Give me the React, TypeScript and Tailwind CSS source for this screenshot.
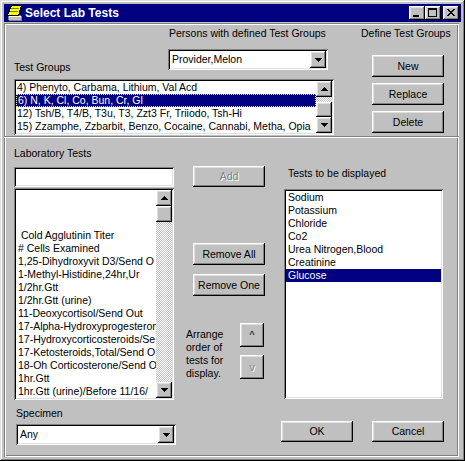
import clsx from "clsx";
import type { ReactNode } from "react";

const raised =
  "shadow-[inset_-1px_-1px_#000,inset_1px_1px_#fff,inset_-2px_-2px_#808080,inset_2px_2px_#dfdfdf]";
const sunken =
  "shadow-[inset_1px_1px_#808080,inset_-1px_-1px_#fff,inset_2px_2px_#000,inset_-2px_-2px_#dfdfdf]";
const dither =
  "bg-[image:repeating-conic-gradient(#c0c0c0_0_25%,#fff_0_50%)] bg-[length:2px_2px]";

const testGroups = [
  "4) Phenyto, Carbama, Lithium, Val Acd",
  "6) N, K, Cl, Co, Bun, Cr, Gl",
  "12) Tsh/B, T4/B, T3u, T3, Zzt3 Fr, Triiodo, Tsh-Hi",
  "15) Zzamphe, Zzbarbit, Benzo, Cocaine, Cannabi, Metha, Opia",
];

const labTests = [
  "",
  "",
  "",
  " Cold Agglutinin Titer",
  "# Cells Examined",
  "1,25-Dihydroxyvit D3/Send O",
  "1-Methyl-Histidine,24hr,Ur",
  "1/2hr.Gtt",
  "1/2hr.Gtt (urine)",
  "11-Deoxycortisol/Send Out",
  "17-Alpha-Hydroxyprogesteron",
  "17-Hydroxycorticosteroids/Se",
  "17-Ketosteroids,Total/Send O",
  "18-Oh Corticosterone/Send O",
  "1hr.Gtt",
  "1hr.Gtt (urine)/Before 11/16/",
];

const displayed = [
  "Sodium",
  "Potassium",
  "Chloride",
  "Co2",
  "Urea Nitrogen,Blood",
  "Creatinine",
  "Glucose",
];

function Tri({ dir }: { dir: "up" | "down" }) {
  const rows = dir === "up" ? [0, 1, 2, 3] : [3, 2, 1, 0];
  return (
    <svg width="7" height="4" viewBox="0 0 7 4" shapeRendering="crispEdges">
      {rows.map((w, i) => (
        <rect key={i} x={3 - w} y={i} width={w * 2 + 1} height={1} fill="#000" />
      ))}
    </svg>
  );
}

function Arrow({ dir, className }: { dir: "up" | "down"; className?: string }) {
  return (
    <div className={clsx("flex w-[16px] items-center justify-center bg-[#c0c0c0]", raised, className)}>
      <Tri dir={dir} />
    </div>
  );
}

function Btn({
  children,
  className,
  disabled,
}: {
  children: ReactNode;
  className?: string;
  disabled?: boolean;
}) {
  return (
    <div
      className={clsx(
        "flex shrink-0 items-center justify-center bg-[#c0c0c0] whitespace-nowrap",
        raised,
        disabled ? "text-[#808080] [text-shadow:1px_1px_0_#fff]" : "text-black",
        className,
      )}
    >
      {children}
    </div>
  );
}

function Combo({ value, className }: { value: string; className?: string }) {
  return (
    <div className={clsx("flex shrink-0 bg-white p-[2px]", sunken, className)}>
      <div className="flex-1 self-center pl-[2px] whitespace-nowrap">{value}</div>
      <Arrow dir="down" className="h-full" />
    </div>
  );
}

function TitleButton({ kind }: { kind: "min" | "max" | "close" }) {
  return (
    <div className={clsx("h-[14px] w-[16px] bg-[#c0c0c0]", raised)}>
      <svg width="16" height="14" viewBox="0 0 16 14" shapeRendering="crispEdges">
        {kind === "min" && <rect x="4" y="9" width="6" height="2" fill="#000" />}
        {kind === "max" && (
          <g fill="#000">
            <rect x="3" y="2" width="9" height="2" />
            <rect x="3" y="2" width="1" height="9" />
            <rect x="11" y="2" width="1" height="9" />
            <rect x="3" y="10" width="9" height="1" />
          </g>
        )}
        {kind === "close" && (
          <g fill="#000">
            {[0, 1, 2, 3, 4, 5, 6].map((i) => (
              <g key={i}>
                <rect x={4 + i} y={3 + i} width="2" height="1" />
                <rect x={10 - i} y={3 + i} width="2" height="1" />
              </g>
            ))}
          </g>
        )}
      </svg>
    </div>
  );
}

function TitleIcon() {
  return (
    <svg width="16" height="16" viewBox="0 0 16 16" shapeRendering="crispEdges">
      <polygon points="2,10 14,10 15,11 15,15 3,15 2,14" fill="#fff" stroke="#808080" strokeWidth="1" />
      <rect x="3" y="12" width="12" height="3" fill="#c0c0c0" />
      <polygon points="5.5,0.5 15.5,0.5 12.5,10.5 1.5,10.5" fill="#ffff00" stroke="#000" strokeWidth="1" />
      <line x1="5" y1="3.5" x2="13" y2="3.5" stroke="#808000" />
      <line x1="4" y1="6.5" x2="12" y2="6.5" stroke="#808000" />
    </svg>
  );
}

export default function App() {
  return (
    <div className="h-[461px] w-[465px] bg-[#c0c0c0] p-[4px] font-['Liberation_Sans',Arial,sans-serif] text-[10.5px] leading-[13px] text-black shadow-[inset_-1px_-1px_#000,inset_1px_1px_#dfdfdf,inset_-2px_-2px_#808080,inset_2px_2px_#fff] select-none">
      {/* title bar */}
      <div className="flex h-[18px] items-center bg-[#000080] px-[2px]">
        <TitleIcon />
        <span className="ml-[3px] text-[12px] leading-[18px] font-bold text-white">Select Lab Tests</span>
        <div className="ml-auto flex">
          <TitleButton kind="min" />
          <TitleButton kind="max" />
          <div className="w-[2px]" />
          <TitleButton kind="close" />
        </div>
      </div>

      <div className="mt-[1px] flex h-[434px] w-[455px] flex-col shadow-[inset_1px_1px_#808080,inset_-1px_-1px_#fff,inset_2px_2px_#fff,inset_-2px_-2px_#808080]">
        {/* test groups */}
        <div className="flex h-[113px]">
          <div className="ml-[10px] flex w-[320px] flex-col">
            <div className="mt-[4px] pl-[155px] whitespace-nowrap">Persons with defined Test Groups</div>
            <div className="mt-[9px] flex h-[30px]">
              <div className="w-[154px] pt-[12px]">Test Groups</div>
              <Combo value="Provider,Melon" className="h-[21px] w-[160px]" />
            </div>
            <div className={clsx("flex h-[56px] w-[320px] bg-white p-[2px]", sunken)}>
              <div className="min-w-0 flex-1 overflow-hidden">
                {testGroups.map((g, i) => (
                  <div
                    key={g}
                    className={clsx(
                      "h-[13px] pl-[1px] whitespace-nowrap",
                      i === 1 && "border border-dotted border-[#ffff00] bg-[#000080] pl-0 leading-[11px] text-white",
                    )}
                  >
                    {g}
                  </div>
                ))}
              </div>
              <div className="flex w-[16px] flex-col">
                <Arrow dir="up" className="h-[16px]" />
                <div className={clsx("h-[5px]", dither)} />
                <div className={clsx("h-[15px] bg-[#c0c0c0]", raised)} />
                <Arrow dir="down" className="h-[16px]" />
              </div>
            </div>
          </div>
          <div className="ml-[27px] flex flex-col">
            <div className="mt-[4px] whitespace-nowrap">Define Test Groups</div>
            <Btn className="mt-[15px] ml-[11px] h-[22px] w-[72px]">New</Btn>
            <Btn className="mt-[6px] ml-[11px] h-[22px] w-[72px]">Replace</Btn>
            <Btn className="mt-[6px] ml-[11px] h-[22px] w-[72px]">Delete</Btn>
          </div>
        </div>

        <div className="h-[2px] border-t border-b border-t-[#808080] border-b-white" />

        {/* lab tests */}
        <div className="flex pt-[9px]">
          <div className="ml-[10px] flex w-[162px] flex-col">
            <div className="whitespace-nowrap">Laboratory Tests</div>
            <div className={clsx("mt-[7px] h-[20px] w-[160px] bg-white", sunken)} />
            <div className={clsx("mt-[1px] flex h-[212px] w-[160px] bg-white p-[2px]", sunken)}>
              <div className="min-w-0 flex-1 overflow-hidden">
                {labTests.map((t, i) => (
                  <div key={i} className="h-[13px] pl-[2px] whitespace-pre">
                    {t}
                  </div>
                ))}
              </div>
              <div className="flex w-[16px] flex-col">
                <Arrow dir="up" className="h-[16px]" />
                <div className={clsx("h-[16px] bg-[#c0c0c0]", raised)} />
                <div className={clsx("flex-1", dither)} />
                <Arrow dir="down" className="h-[16px]" />
              </div>
            </div>
            <div className="mt-[7px] ml-[2px]">Specimen</div>
            <Combo value="Any" className="mt-[4px] ml-[2px] h-[21px] w-[160px]" />
          </div>

          <div className="ml-[10px] flex w-[79px] flex-col">
            <Btn disabled className="mt-[19px] ml-[7px] h-[21px] w-[72px]">
              Add
            </Btn>
            <Btn className="mt-[56px] ml-[7px] h-[22px] w-[72px]">Remove All</Btn>
            <Btn className="mt-[9px] ml-[7px] h-[22px] w-[72px]">Remove One</Btn>
            <div className="mt-[27px] flex">
              <div className="w-[54px] pt-[5px]">
                <div>Arrange</div>
                <div>order of</div>
                <div>tests for</div>
                <div>display.</div>
              </div>
              <div className="flex flex-col gap-[8px]">
                <Btn className="h-[24px] w-[24px]">^</Btn>
                <Btn disabled className="h-[24px] w-[24px]">
                  v
                </Btn>
              </div>
            </div>
          </div>

          <div className="ml-[16px] flex w-[163px] flex-col">
            <div className="mt-[20px] ml-[7px] whitespace-nowrap">Tests to be displayed</div>
            <div className={clsx("mt-[9px] ml-[3px] h-[210px] w-[159px] bg-white p-[2px]", sunken)}>
              {displayed.map((d, i) => (
                <div
                  key={d}
                  className={clsx(
                    "h-[13px] pl-[2px] whitespace-nowrap",
                    i === displayed.length - 1 && "bg-[#000080] text-white",
                  )}
                >
                  {d}
                </div>
              ))}
            </div>
            <div className="mt-[22px] flex gap-[19px]">
              <Btn className="h-[21px] w-[72px]">OK</Btn>
              <Btn className="h-[21px] w-[72px]">Cancel</Btn>
            </div>
          </div>
        </div>
      </div>
    </div>
  );
}
